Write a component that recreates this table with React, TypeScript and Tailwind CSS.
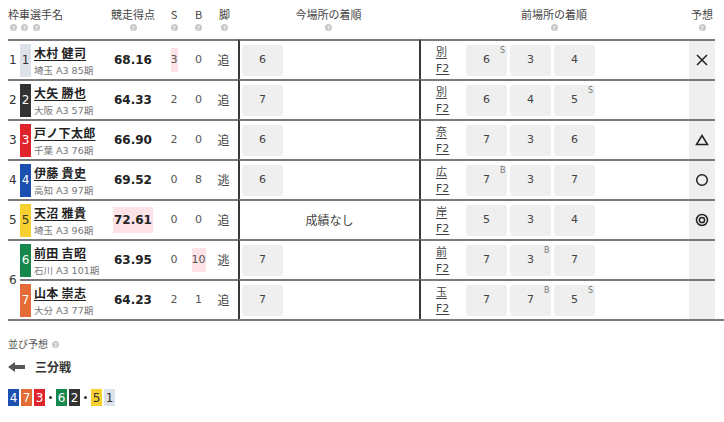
import React from "react";

const CAR: Record<number, string> = {
  1: "bg-[#dde1ea] text-[#333]",
  2: "bg-[#333333] text-white",
  3: "bg-[#e0242c] text-white",
  4: "bg-[#1c50b0] text-white",
  5: "bg-[#f6cf30] text-[#333]",
  6: "bg-[#17884c] text-white",
  7: "bg-[#e56c36] text-white",
};

type Prev = { n: number; sup?: string };
type Rider = {
  waku: number;
  span?: number;
  car: number;
  name: string;
  sub: string;
  score: string;
  hotScore?: boolean;
  s: string;
  hotS?: boolean;
  b: string;
  hotB?: boolean;
  leg: string;
  now: number[] | null;
  venue: string;
  prev: Prev[];
  mark?: "x" | "tri" | "circle" | "double";
};

const riders: Rider[] = [
  { waku: 1, car: 1, name: "木村 健司", sub: "埼玉 A3 85期", score: "68.16", s: "3", hotS: true, b: "0", leg: "追", now: [6], venue: "別", prev: [{ n: 6, sup: "S" }, { n: 3 }, { n: 4 }], mark: "x" },
  { waku: 2, car: 2, name: "大矢 勝也", sub: "大阪 A3 57期", score: "64.33", s: "2", b: "0", leg: "追", now: [7], venue: "別", prev: [{ n: 6 }, { n: 4 }, { n: 5, sup: "S" }] },
  { waku: 3, car: 3, name: "戸ノ下太郎", sub: "千葉 A3 76期", score: "66.90", s: "2", b: "0", leg: "追", now: [6], venue: "奈", prev: [{ n: 7 }, { n: 3 }, { n: 6 }], mark: "tri" },
  { waku: 4, car: 4, name: "伊藤 貴史", sub: "高知 A3 97期", score: "69.52", s: "0", b: "8", leg: "逃", now: [6], venue: "広", prev: [{ n: 7, sup: "B" }, { n: 3 }, { n: 7 }], mark: "circle" },
  { waku: 5, car: 5, name: "天沼 雅貴", sub: "埼玉 A3 96期", score: "72.61", hotScore: true, s: "0", b: "0", leg: "追", now: null, venue: "岸", prev: [{ n: 5 }, { n: 3 }, { n: 4 }], mark: "double" },
  { waku: 6, span: 2, car: 6, name: "前田 吉昭", sub: "石川 A3 101期", score: "63.95", s: "0", b: "10", hotB: true, leg: "逃", now: [7], venue: "前", prev: [{ n: 7 }, { n: 3, sup: "B" }, { n: 7 }] },
  { waku: 0, car: 7, name: "山本 崇志", sub: "大分 A3 77期", score: "64.23", s: "2", b: "1", leg: "追", now: [7], venue: "玉", prev: [{ n: 7 }, { n: 7, sup: "B" }, { n: 5, sup: "S" }] },
];

const COLS = "grid grid-cols-[12px_84px_58px_24px_25px_27px_181px_270px_26px]";
const NUM = { fontFamily: "'DejaVu Sans', 'Noto Sans CJK JP', sans-serif" };

function Help() {
  return (
    <span className="inline-flex h-[7px] w-[7px] items-center justify-center rounded-full bg-[#c8c8c8] text-[5px] font-bold leading-none text-white">
      ?
    </span>
  );
}

function Mark({ kind }: { kind?: Rider["mark"] }) {
  if (!kind) return null;
  return (
    <svg width="14" height="14" viewBox="0 0 14 14" fill="none" stroke="#222" strokeWidth="1.5">
      {kind === "x" && <path d="M2 2 L12 12 M12 2 L2 12" />}
      {kind === "tri" && <path d="M7 2.5 L12.5 11.5 L1.5 11.5 Z" strokeLinejoin="miter" />}
      {kind === "circle" && <circle cx="7" cy="7" r="5.3" />}
      {kind === "double" && (
        <>
          <circle cx="7" cy="7" r="5.5" />
          <circle cx="7" cy="7" r="2.6" />
        </>
      )}
    </svg>
  );
}

function HeadCell({ label, className = "" }: { label: string; className?: string }) {
  return (
    <div className={`flex flex-col items-center pt-[7px] ${className}`}>
      <span className="text-[11px] leading-[14px] text-[#444]">{label}</span>
      <span className="mt-[3px] flex"><Help /></span>
    </div>
  );
}

function Box({ n, sup }: Prev) {
  return (
    <div className="relative flex h-[31px] w-[41px] items-center justify-center rounded-[3px] bg-[#efefef] text-[11px] text-[#444]" style={NUM}>
      {n}
      {sup && <span className="absolute left-[34px] top-[2px] text-[8px] leading-none text-[#777]">{sup}</span>}
    </div>
  );
}

export default function App() {
  return (
    <div className="min-h-screen bg-white pl-[8px] text-[#333]" style={{ fontFamily: "'Noto Sans CJK JP', sans-serif" }}>
      {/* header */}
      <div className={`${COLS} h-[39px]`}>
        <div className="col-span-2 flex flex-col pt-[7px]">
          <span className="text-[11px] leading-[14px] text-[#444]">枠車選手名</span>
          <span className="ml-[2px] mt-[3px] flex gap-[4px]">
            <Help />
            <Help />
            <span className="ml-[1px] flex"><Help /></span>
          </span>
        </div>
        <HeadCell label="競走得点" />
        <HeadCell label="S" />
        <HeadCell label="B" />
        <HeadCell label="脚" />
        <HeadCell label="今場所の着順" />
        <HeadCell label="前場所の着順" />
        <HeadCell label="予想" />
      </div>

      {/* body */}
      <div className={`${COLS} auto-rows-[40px] border-b-2 border-[#7a7a7a]`}>
        {riders.map((r) => {
          const line = "border-t-2 border-[#7a7a7a]";
          return (
            <React.Fragment key={r.car}>
              {r.waku > 0 && (
                <div className={`${line} flex items-center pl-[1px] text-[12px] text-[#333] ${r.span === 2 ? "row-span-2" : ""}`} style={NUM}>
                  {r.waku}
                </div>
              )}
              <div className={`${line} flex items-center`}>
                <div className={`flex h-[33px] w-[11px] shrink-0 items-center justify-center text-[12px] ${CAR[r.car]}`} style={NUM}>
                  {r.car}
                </div>
                <div className="ml-[3px] flex flex-col whitespace-nowrap">
                  <span className="text-[12px] font-bold leading-[18px] tracking-[0.3px] text-[#222] underline underline-offset-2">{r.name}</span>
                  <span className="mt-[2px] text-[9.5px] leading-[13px] text-[#777]" style={NUM}>{r.sub}</span>
                </div>
              </div>
              <div className={`${line} flex items-center justify-center`}>
                <span className={`px-[1px] text-[12px] font-bold leading-[26px] text-[#222] ${r.hotScore ? "bg-[#fde3e7]" : ""}`} style={NUM}>
                  {r.score}
                </span>
              </div>
              <div className={`${line} flex items-center justify-center`}>
                <span className={`text-[11px] leading-[24px] text-[#555] ${r.hotS ? "bg-[#fde3e7]" : ""}`} style={NUM}>{r.s}</span>
              </div>
              <div className={`${line} flex items-center justify-center`}>
                <span className={`text-[11px] leading-[24px] text-[#555] ${r.hotB ? "bg-[#fde3e7]" : ""}`} style={NUM}>{r.b}</span>
              </div>
              <div className={`${line} flex items-center justify-center pr-[2px] text-[12px] text-[#444]`}>{r.leg}</div>
              <div className={`${line} flex items-center border-l-2 border-l-[#3a3a3a] pl-[2px]`}>
                {r.now ? (
                  r.now.map((n, i) => <Box key={i} n={n} />)
                ) : (
                  <span className="w-full pr-[2px] text-center text-[12px] text-[#444]">成績なし</span>
                )}
              </div>
              <div className={`${line} flex items-center border-l-2 border-l-[#3a3a3a]`}>
                <div className="flex w-[45px] shrink-0 flex-col pl-[15px] text-[11px] leading-[18px] text-[#444] underline underline-offset-2">
                  <span>{r.venue}</span>
                  <span style={NUM}>F2</span>
                </div>
                <div className="flex gap-[3px]">
                  {r.prev.map((p, i) => (
                    <Box key={i} n={p.n} sup={p.sup} />
                  ))}
                </div>
              </div>
              <div className={`${line} flex items-center justify-center bg-[#efefef]`}>
                <Mark kind={r.mark} />
              </div>
            </React.Fragment>
          );
        })}
      </div>

      {/* line prediction */}
      <div className="mt-[16px] flex items-center gap-[4px]">
        <span className="text-[10px] leading-[14px] text-[#555]">並び予想</span>
        <Help />
      </div>
      <div className="mt-[8px] flex items-center">
        <svg width="17" height="10" viewBox="0 0 17 10" fill="#555">
          <path d="M0 5 L7 0 L7 3 L17 3 L17 7 L7 7 L7 10 Z" />
        </svg>
        <span className="ml-[10px] text-[12px] font-bold leading-[16px] text-[#333]">三分戦</span>
      </div>
      <div className="mt-[14px] flex items-center gap-[2px]">
        {[[4, 7, 3], [6, 2], [5, 1]].map((group, gi) => (
          <React.Fragment key={gi}>
            {gi > 0 && (
              <span className="flex w-[7px] justify-center">
                <span className="h-[3px] w-[3px] rounded-full bg-[#333]" />
              </span>
            )}
            {group.map((c) => (
              <span key={c} className={`flex h-[17px] w-[11px] items-center justify-center text-[12px] ${CAR[c]}`} style={NUM}>
                {c}
              </span>
            ))}
          </React.Fragment>
        ))}
      </div>
    </div>
  );
}
